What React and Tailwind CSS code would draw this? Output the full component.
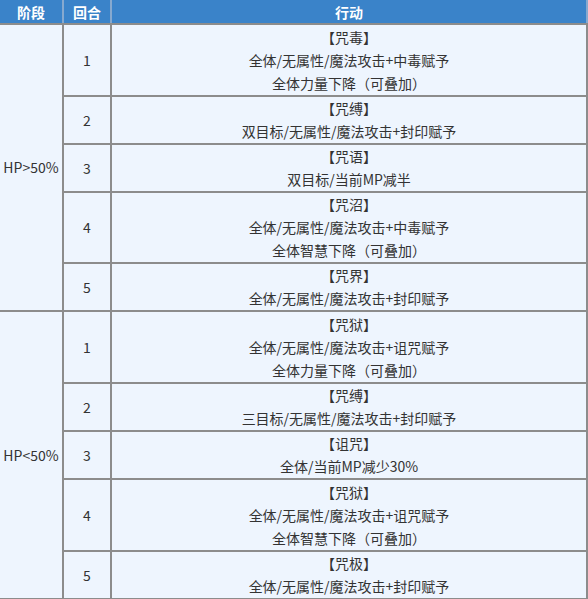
import React from 'react';

const PHASES = [
  {
    label: 'HP>50%',
    turns: [
      { h: 70, lines: ['【咒毒】', '全体/无属性/魔法攻击+中毒赋予', '全体力量下降（可叠加）'] },
      { h: 46, lines: ['【咒缚】', '双目标/无属性/魔法攻击+封印赋予'] },
      { h: 46, lines: ['【咒语】', '双目标/当前MP减半'] },
      { h: 69, lines: ['【咒沼】', '全体/无属性/魔法攻击+中毒赋予', '全体智慧下降（可叠加）'] },
      { h: 46, lines: ['【咒界】', '全体/无属性/魔法攻击+封印赋予'] },
    ],
  },
  {
    label: 'HP<50%',
    turns: [
      { h: 70, lines: ['【咒狱】', '全体/无属性/魔法攻击+诅咒赋予', '全体力量下降（可叠加）'] },
      { h: 46, lines: ['【咒缚】', '三目标/无属性/魔法攻击+封印赋予'] },
      { h: 46, lines: ['【诅咒】', '全体/当前MP减少30%'] },
      { h: 70, lines: ['【咒狱】', '全体/无属性/魔法攻击+诅咒赋予', '全体智慧下降（可叠加）'] },
      { h: 46, lines: ['【咒极】', '全体/无属性/魔法攻击+封印赋予'] },
    ],
  },
];

const cell = 'border-r-2 border-b-2 border-[#8c8c8c] bg-[#eef5fe] text-center align-middle p-0';

export default function App() {
  return (
    <div className="w-[588px] h-[599px] bg-white overflow-hidden text-[14px] text-[#333] font-['Noto_Sans_CJK_SC','Noto_Sans',sans-serif]">
      <table className="table-fixed w-[587px] border-collapse">
        <colgroup>
          <col className="w-[63px]" />
          <col className="w-[48px]" />
          <col className="w-[476px]" />
        </colgroup>
        <thead>
          <tr>
            {['阶段', '回合', '行动'].map(h => (
              <th key={h} className="h-[24px] bg-[#3a83c9] text-white font-bold text-[14px] leading-[22px] border-r-2 border-r-[#86a9cf] border-b-2 border-b-[#8c8c8c] p-0">
                {h}
              </th>
            ))}
          </tr>
        </thead>
        <tbody>
          {PHASES.map(phase =>
            phase.turns.map((t, i) => (
              <tr key={phase.label + i}>
                {i === 0 && (
                  <td rowSpan={phase.turns.length} className={cell}>{phase.label}</td>
                )}
                <td className={cell}>{i + 1}</td>
                <td className={cell}>
                  <div className="flex flex-col justify-center overflow-hidden" style={{ height: t.h }}>
                    {t.lines.map((l, j) => (
                      <div key={j} className="leading-[23px]">{l}</div>
                    ))}
                  </div>
                </td>
              </tr>
            ))
          )}
        </tbody>
      </table>
    </div>
  );
}
